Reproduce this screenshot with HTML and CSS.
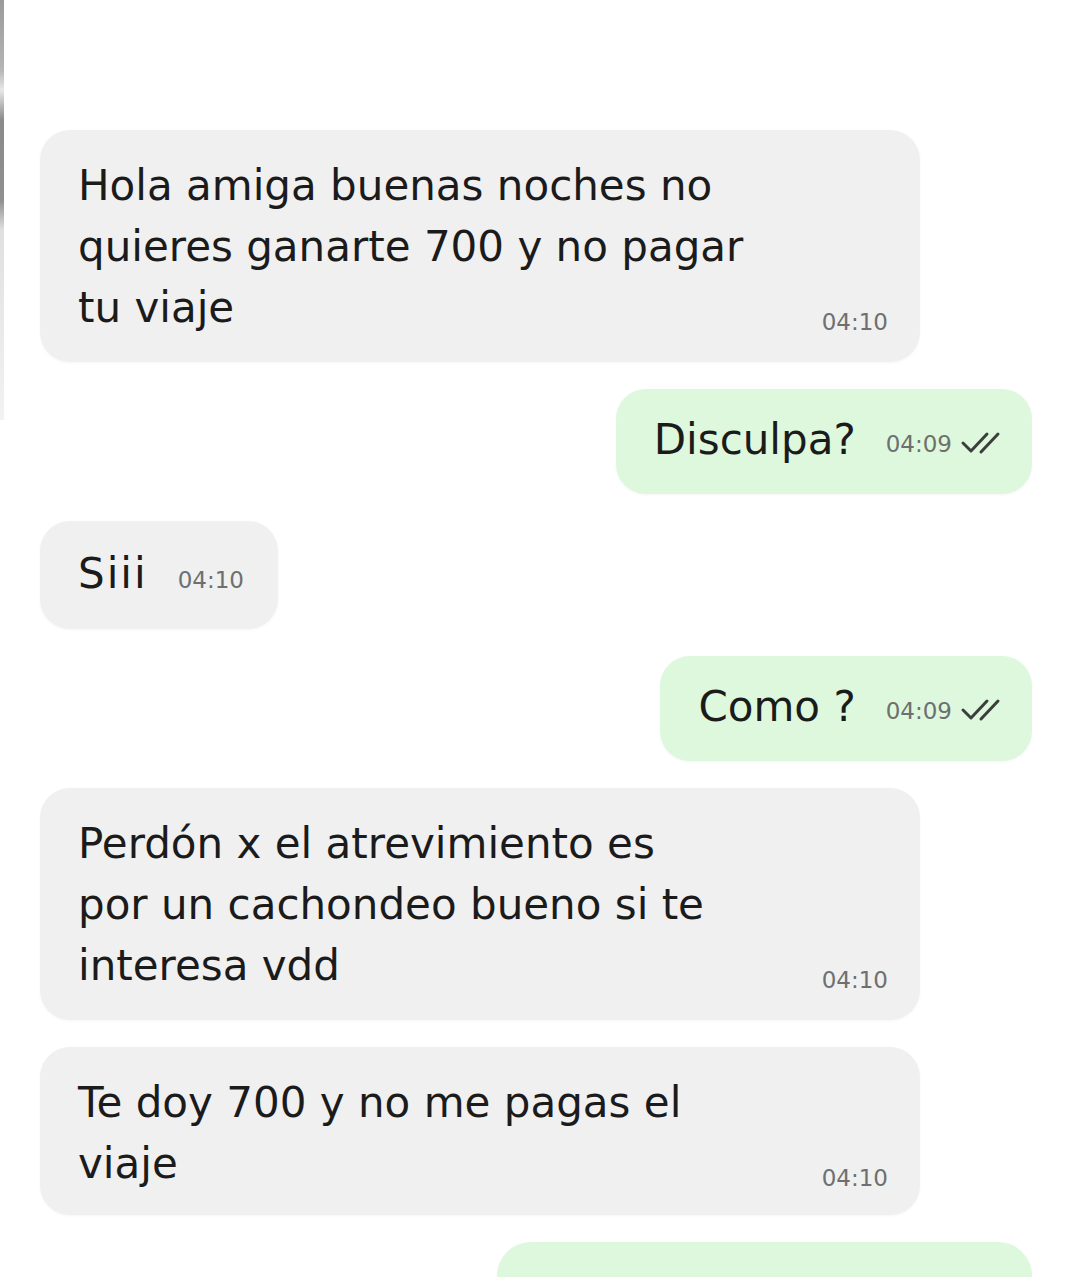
FILE: index.html
```html
<!DOCTYPE html>
<html lang="es">
<head>
<meta charset="utf-8">
<title>Chat</title>
<link rel="stylesheet" href="styles.css">
</head>
<body>
<div class="screen">
  <div class="edge"></div>
  <main class="chat">
    <div class="msg in wide">
      <p class="line">Hola amiga buenas noches no</p>
      <p class="line">quieres ganarte 700 y no pagar</p>
      <div class="last"><span>tu viaje</span><span class="time">04:10</span></div>
    </div>

    <div class="msg out short">
      <span class="text">Disculpa?</span><span class="time">04:09</span><svg class="ticks" viewBox="0 0 52 24" width="52" height="24" aria-hidden="true"><path d="M3 12 L11 20 L27 3" /><path d="M21 21 L38 3" /></svg>
    </div>

    <div class="msg in short">
      <span class="text">Siii</span><span class="time">04:10</span>
    </div>

    <div class="msg out short">
      <span class="text">Como ?</span><span class="time">04:09</span><svg class="ticks" viewBox="0 0 52 24" width="52" height="24" aria-hidden="true"><path d="M3 12 L11 20 L27 3" /><path d="M21 21 L38 3" /></svg>
    </div>

    <div class="msg in wide">
      <p class="line">Perdón x el atrevimiento es</p>
      <p class="line">por un cachondeo bueno si te</p>
      <div class="last"><span>interesa vdd</span><span class="time">04:10</span></div>
    </div>

    <div class="msg in wide compact">
      <p class="line">Te doy 700 y no me pagas el</p>
      <div class="last"><span>viaje</span><span class="time">04:10</span></div>
    </div>

    <div class="msg out partial"></div>
  </main>
</div>
</body>
</html>
```

FILE: styles.css
```css
html, body {
  margin: 0;
  padding: 0;
  background: #ffffff;
}

body {
  width: 1080px;
  height: 1277px;
  overflow: hidden;
  font-family: "DejaVu Sans", "Noto Sans", sans-serif;
  color: #1b1b1b;
}

.screen {
  display: flex;
  height: 1277px;
}

.edge {
  flex: 0 0 4px;
  height: 420px;
  background: linear-gradient(to bottom, #9a9a9a 0, #b5b5b5 70px, #e8e8e8 90px, #8a8a8a 120px, #8f8f8f 200px, #e0e0e0 230px, #f2f2f2 420px);
}

.chat {
  flex: 1;
  display: flex;
  flex-direction: column;
  gap: 27px;
  padding: 130px 48px 0 36px;
}

.msg {
  border-radius: 30px;
  font-size: 42px;
  line-height: 61px;
  box-shadow: 0 1px 3px rgba(0, 0, 0, 0.04);
}

.msg.in {
  align-self: flex-start;
  background: #f0f0f0;
}

.msg.out {
  align-self: flex-end;
  background: #ddf8dd;
}

.msg.wide {
  width: 880px;
  box-sizing: border-box;
  padding: 25px 32px 24px 38px;
}

.msg.wide.compact {
  padding-bottom: 21px;
}

.line {
  margin: 0;
  white-space: nowrap;
}

.last {
  display: flex;
  justify-content: space-between;
  align-items: flex-end;
  white-space: nowrap;
}

.time {
  font-size: 23px;
  line-height: 23px;
  color: #6f6f6f;
  margin-bottom: 4px;
}

.msg.short {
  display: flex;
  align-items: center;
  white-space: nowrap;
  padding: 20px 20px 24px 38px;
}

.msg.in.short {
  padding: 22px 34px 25px 38px;
}

.msg.short .time {
  margin: 10px 0 0 30px;
}

.msg.in.short .time {
  margin-left: 30px;
  margin-top: 14px;
}

.msg.in.short .text {
  letter-spacing: 2px;
}

.ticks {
  margin: 6px 0 0 8px;
  fill: none;
  stroke: #3d3d3d;
  stroke-width: 3;
  stroke-linecap: round;
  stroke-linejoin: round;
}

.msg.partial {
  width: 535px;
  height: 90px;
  border-radius: 34px 34px 0 0;
}
```
